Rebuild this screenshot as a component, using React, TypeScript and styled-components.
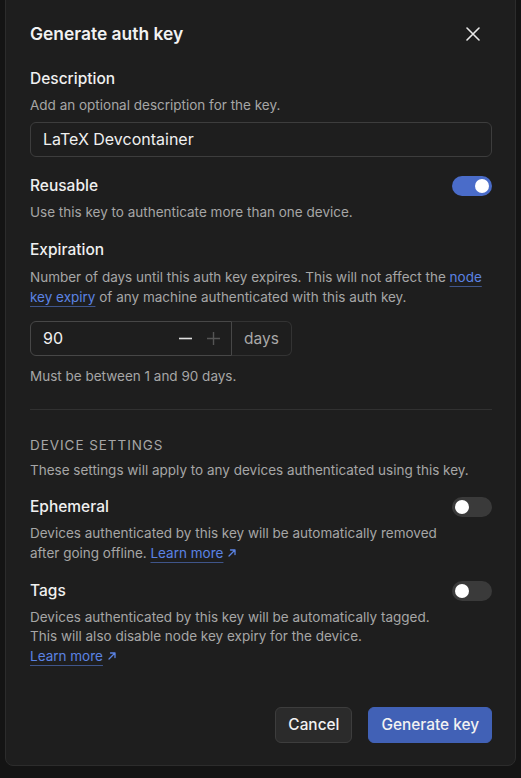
import React from "react";
import styled, { createGlobalStyle } from "styled-components";

const Global = createGlobalStyle`
  html, body { margin: 0; padding: 0; background: #141414; }
  body { font-family: Inter, "Noto Sans", sans-serif; color: #ededed; -webkit-font-smoothing: antialiased; }
  * { box-sizing: border-box; }
`;

const Page = styled.div`
  width: 521px;
  height: 778px;
  overflow: hidden;
  padding: 0 5px 0 5px;
`;

const Dialog = styled.div`
  margin-top: -10px;
  width: 511px;
  background: #1e1e1e;
  border: 1px solid #2c2c2c;
  border-radius: 8px;
  padding: 31px 23px 22px 24px;
`;

const Header = styled.div`
  display: flex;
  align-items: center;
  justify-content: space-between;
  height: 24px;
`;

const Title = styled.h2`
  margin: 0;
  font-size: 17.4px;
  font-weight: 600;
  line-height: 24px;
  color: #f2f2f2;
`;

const CloseButton = styled.button`
  border: 0;
  background: transparent;
  color: #e8e8e8;
  padding: 0;
  width: 24px;
  height: 24px;
  margin-right: 7px;
  display: flex;
  align-items: center;
  justify-content: center;
`;

const Section = styled.div<{ $top: number }>`
  margin-top: ${(p) => p.$top}px;
  display: flex;
  flex-direction: column;
`;

const LabelRow = styled.div`
  display: flex;
  justify-content: space-between;
  align-items: center;
`;

const Label = styled.div`
  font-size: 15.5px;
  font-weight: 500;
  line-height: 20px;
  color: #f0f0f0;
`;

const Help = styled.p<{ $top?: number }>`
  margin: ${(p) => p.$top ?? 7}px 0 0 0;
  font-size: 13.5px;
  line-height: 19.7px;
  color: #a6a6a6;
`;

const Link = styled.a<{ $nowrap?: boolean }>`
  color: #5b83e3;
  text-decoration: underline;
  text-decoration-color: rgba(91, 131, 227, 0.55);
  text-underline-offset: 4px;
  text-decoration-thickness: 1px;
  white-space: ${(p) => (p.$nowrap ? "nowrap" : "normal")};
`;

const Arrow = styled.svg`
  display: inline-block;
  width: 10px;
  height: 10px;
  margin-left: 4px;
  vertical-align: 0px;
`;

const TextInput = styled.input`
  margin-top: 6px;
  height: 35px;
  width: 100%;
  background: #1e1e1e;
  border: 1px solid #3d3d3d;
  border-radius: 6px;
  padding: 0 12px;
  font: inherit;
  font-size: 16px;
  color: #f0f0f0;
  outline: none;
`;

const Toggle = styled.div<{ $on: boolean }>`
  width: 40px;
  height: 20px;
  border-radius: 10px;
  background: ${(p) => (p.$on ? "#4a6cc9" : "#3a3a3a")};
  display: flex;
  align-items: center;
  justify-content: ${(p) => (p.$on ? "flex-end" : "flex-start")};
  padding: 0 3px;
  &::after {
    content: "";
    width: 14px;
    height: 14px;
    border-radius: 50%;
    background: #ffffff;
  }
`;

const NumberGroup = styled.div`
  margin-top: 13px;
  display: flex;
  width: 262px;
  height: 35px;
`;

const NumberField = styled.div`
  flex: 1;
  display: flex;
  align-items: center;
  border: 1px solid #474747;
  border-radius: 6px 0 0 6px;
  padding: 0 4px 0 12px;
  font-size: 16px;
  color: #f0f0f0;
`;

const NumberValue = styled.span`
  flex: 1;
`;

const Stepper = styled.span<{ $dim?: boolean }>`
  display: flex;
  width: 28px;
  justify-content: center;
  color: ${(p) => (p.$dim ? "#555555" : "#e0e0e0")};
`;

const Addon = styled.div`
  width: 60px;
  display: flex;
  align-items: center;
  justify-content: center;
  border: 1px solid #333333;
  border-left: 0;
  border-radius: 0 6px 6px 0;
  font-size: 15.5px;
  color: #a8a8a8;
`;

const Divider = styled.hr`
  margin: 22px 0 0 0;
  border: 0;
  border-top: 1px solid #313131;
`;

const Overline = styled.div`
  font-size: 13.5px;
  line-height: 20px;
  letter-spacing: 0.07em;
  color: #a6a6a6;
  text-transform: uppercase;
`;

const Footer = styled.div`
  margin-top: 40px;
  display: flex;
  justify-content: flex-end;
  gap: 16px;
`;

const Button = styled.button<{ $primary?: boolean }>`
  height: 36px;
  padding: 0 12px;
  border-radius: 6px;
  font: inherit;
  font-size: 15.4px;
  font-weight: 500;
  color: #f2f2f2;
  background: ${(p) => (p.$primary ? "#4161b6" : "#2b2b2b")};
  border: 1px solid ${(p) => (p.$primary ? "#4161b6" : "#3d3d3d")};
`;

const ArrowIcon = () => (
  <Arrow viewBox="0 0 10 10" fill="none" stroke="currentColor" strokeWidth="1.3" strokeLinecap="round" strokeLinejoin="round">
    <path d="M2 8 L8 2 M3.5 2 H8 V6.5" />
  </Arrow>
);

export default function App() {
  return (
    <>
      <Global />
      <Page>
        <Dialog>
          <Header>
            <Title>Generate auth key</Title>
            <CloseButton aria-label="Close">
              <svg width="14" height="14" viewBox="0 0 14 14" fill="none" stroke="currentColor" strokeWidth="1.6" strokeLinecap="round">
                <path d="M1 1 L13 13 M13 1 L1 13" />
              </svg>
            </CloseButton>
          </Header>

          <Section $top={23}>
            <Label>Description</Label>
            <Help>Add an optional description for the key.</Help>
            <TextInput defaultValue="LaTeX Devcontainer" />
          </Section>

          <Section $top={19}>
            <LabelRow>
              <Label>Reusable</Label>
              <Toggle $on />
            </LabelRow>
            <Help>Use this key to authenticate more than one device.</Help>
          </Section>

          <Section $top={18}>
            <Label>Expiration</Label>
            <Help $top={8}>
              Number of days until this auth key expires. This will not affect the <Link>node key expiry</Link> of any
              machine authenticated with this auth key.
            </Help>
            <NumberGroup>
              <NumberField>
                <NumberValue>90</NumberValue>
                <Stepper>
                  <svg width="13" height="13" viewBox="0 0 13 13" stroke="currentColor" strokeWidth="1.6">
                    <path d="M0 6.5 H13" />
                  </svg>
                </Stepper>
                <Stepper $dim>
                  <svg width="13" height="13" viewBox="0 0 13 13" stroke="currentColor" strokeWidth="1.4">
                    <path d="M0 6.5 H13 M6.5 0 V13" />
                  </svg>
                </Stepper>
              </NumberField>
              <Addon>days</Addon>
            </NumberGroup>
            <Help $top={11}>Must be between 1 and 90 days.</Help>
          </Section>

          <Divider />

          <Section $top={25}>
            <Overline>Device settings</Overline>
            <Help $top={6}>These settings will apply to any devices authenticated using this key.</Help>
          </Section>

          <Section $top={17}>
            <LabelRow>
              <Label>Ephemeral</Label>
              <Toggle $on={false} />
            </LabelRow>
            <Help>
              Devices authenticated by this key will be automatically removed
              <br />
              after going offline.{" "}
              <Link $nowrap>
                Learn more
                <ArrowIcon />
              </Link>
            </Help>
          </Section>

          <Section $top={17}>
            <LabelRow>
              <Label>Tags</Label>
              <Toggle $on={false} />
            </LabelRow>
            <Help>
              Devices authenticated by this key will be automatically tagged.
              <br />
              This will also disable node key expiry for the device.
              <br />
              <Link $nowrap>
                Learn more
                <ArrowIcon />
              </Link>
            </Help>
          </Section>

          <Footer>
            <Button>Cancel</Button>
            <Button $primary>Generate key</Button>
          </Footer>
        </Dialog>
      </Page>
    </>
  );
}
